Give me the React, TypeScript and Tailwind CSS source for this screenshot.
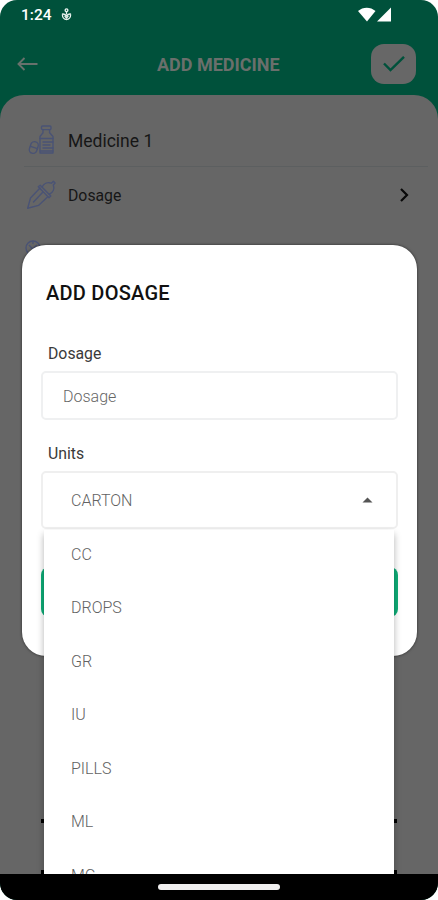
import { useState } from 'react'

const UNITS = ['CC', 'DROPS', 'GR', 'IU', 'PILLS', 'ML', 'MG']

function BottleIcon() {
  return (
    <svg width="28" height="30" viewBox="0 0 28 30" fill="none" stroke="#4a5375" strokeWidth="1.4" strokeLinejoin="round" strokeLinecap="round">
      <rect x="13.500" y="1" width="9.500" height="3.6" rx="1" />
      <path d="M15 4.600v3.200L12 11.500v16.500h13V11.500L21.600 7.800V4.600" />
      <path d="M12 13.500h13M15 17h10M15 20h7M15 23h10M12 26h13" />
      <rect x="2" y="16.500" width="7.600" height="12" rx="3.800" transform="rotate(18 5.800 22.500)" />
      <path d="M2.500 21.300l7 2.300" />
    </svg>
  )
}

function DropperIcon() {
  return (
    <svg width="30" height="30" viewBox="0 0 30 30" fill="none" stroke="#4a5375" strokeWidth="1.4" strokeLinejoin="round" strokeLinecap="round">
      <path d="M13 8L3.500 18 .7 28.200l10.800-2.800 9.300-8.600" />
      <path d="M11.300 6.800l1.900-1.600 10.600 10.800-1.800 1.800z" />
      <path d="M15.200 6.800c2-3.800 5.800-5 9.200-3.600l2-2 1.700 1.800-1.800 2c1.500 3.800-.4 7.400-3.900 9.200" />
      <path d="M15.500 12.500L6.500 22" />
    </svg>
  )
}

function StatusBar() {
  return (
    <div className="flex h-[30px] items-center pl-[21px] pr-[46px] text-white">
      <span className="mt-px text-[15.5px] font-medium leading-none">1:24</span>
      <svg className="mb-px ml-[9px]" width="11" height="13" viewBox="0 0 12 14" fill="none" stroke="#e8f2ee" strokeWidth="1.5">
        <circle cx="6" cy="2.4" r="1.5" />
        <path d="M6 4v3M1.2 6.700c1.500-.8 3 0 4.800 2 1.800-2 3.300-2.800 4.800-2M1.500 7c0 3 2 5.500 4.500 5.500s4.500-2.500 4.500-5.500" />
        <path d="M4 8.700l2 2.100 2-2.100" />
      </svg>
      <svg className="mb-px ml-auto" width="34" height="16" viewBox="0 0 34 16" fill="#fff">
        <path d="M0 4C5-.5 12.500-.5 17.500 4L9 14.500z" />
        <path d="M33 .5v14H19z" />
      </svg>
    </div>
  )
}

export default function App() {
  const [dosage, setDosage] = useState('')
  const [unit, setUnit] = useState('CARTON')

  return (
    <main className="relative h-[900px] w-[438px] overflow-hidden rounded-[17px] bg-[#00513b] font-['Roboto',sans-serif]">
      <StatusBar />
      <header className="flex h-[65px] items-start pl-[17px] pr-[22px] pt-[14px]">
        <button className="mt-[13px]">
          <svg width="22" height="14" viewBox="0 0 22 14" fill="none" stroke="#68716c" strokeWidth="1.9">
            <path d="M20.500 7H1.500M7.500 1L1.500 7l6 6" />
          </svg>
        </button>
        <h1 className="ml-[118px] mt-[12px] text-[18px] font-bold leading-[18px] text-[#6a6f6c]">ADD MEDICINE</h1>
        <button className="ml-auto flex h-10 w-[45px] items-center justify-center rounded-[13px] bg-[#676767]">
          <svg width="22" height="16" viewBox="0 0 22 16" fill="none" stroke="#00513b" strokeWidth="2.4">
            <path d="M1 7.500l6.500 6.500L21 .8" />
          </svg>
        </button>
      </header>

      <section className="h-[779px] rounded-t-[24px] bg-[#666] pl-6">
        <div className="mr-[10px] flex h-[72px] items-start border-b border-[#5c5f60] pt-[30px]">
          <div className="ml-[4px]"><BottleIcon /></div>
          <p className="ml-[12px] mt-[6px] text-[17.500px] leading-5 text-[#161616]">Medicine 1</p>
        </div>
        <div className="flex h-[56px] items-center pr-[29px]">
          <div className="ml-[3px]"><DropperIcon /></div>
          <p className="ml-[11px] mt-[2px] text-[15.800px] leading-5 text-[#161616]">Dosage</p>
          <svg className="ml-auto" width="9" height="14" viewBox="0 0 9 14" fill="none" stroke="#080808" strokeWidth="2.200">
            <path d="M1 1l6 6-6 6" />
          </svg>
        </div>
        <svg className="ml-px mt-[17px]" width="16" height="16" viewBox="0 0 16 16" fill="none" stroke="#4a5375" strokeWidth="1.400">
          <circle cx="8" cy="8" r="7" />
          <path d="M4 5l3.500 4L12 5M8 2v2" />
        </svg>
        <div className="ml-[17px] mr-[41px] pt-[563px]">
          <div className="h-1 bg-black" />
          <div className="mt-[47px] h-[5px] bg-black" />
        </div>
      </section>

      <div className="absolute left-[22px] top-[245px] h-[410.500px] w-[394.500px] rounded-[24px] bg-white px-[19px] shadow-[0_0_3px_rgba(0,0,0,0.6)]">
        <h2 className="ml-[5px] pt-[36px] text-[20px] font-medium leading-[24px] tracking-[0.25px] text-[#111]">ADD DOSAGE</h2>
        <label className="ml-[7px] mt-[39px] block text-[15.800px] leading-5 text-[#3a3a3a]">Dosage</label>
        <input
          value={dosage}
          onChange={(e) => setDosage(e.target.value)}
          placeholder="Dosage"
          className="mt-[7px] block h-[49px] w-full rounded-[5px] border-2 border-[#eff0f1] px-5 pt-[2px] text-[16px] font-light text-[#666] outline-none placeholder:text-[#666]"
        />
        <label className="ml-[7px] mt-[24px] block text-[15.800px] leading-5 text-[#3a3a3a]">Units</label>
        <button className="mt-[7px] flex h-[58px] w-full items-center justify-between rounded-[5px] border-2 border-[#efefef] pl-[28px] pr-[23px] text-[16px] font-light text-[#626262]">
          <span className="pt-[2px]">{unit}</span>
          <svg width="11" height="6" viewBox="0 0 11 6" fill="#555">
            <path d="M.5 5.500L5.500.5l5 5z" />
          </svg>
        </button>
        <button className="mt-[38px] block h-[50px] w-full rounded-[8px] bg-[#0eae78]" />
      </div>

      <ul className="absolute left-[44px] top-[530px] h-[344px] w-[350px] overflow-hidden bg-white shadow-[0_4px_7px_rgba(0,0,0,0.3)]">
        {UNITS.map((u, i) => (
          <li
            key={u}
            onClick={() => setUnit(u)}
            className={`flex h-[53.500px] items-center pl-[27px] text-[16px] font-light text-[#626262] ${i === 0 ? '-mt-[2px]' : ''}`}
          >
            {u}
          </li>
        ))}
      </ul>

      <nav className="absolute inset-x-0 bottom-0 flex h-[26px] justify-center bg-black pt-[10px]">
        <span className="h-[6px] w-[122px] rounded-full bg-[#f0efef]" />
      </nav>
    </main>
  )
}
